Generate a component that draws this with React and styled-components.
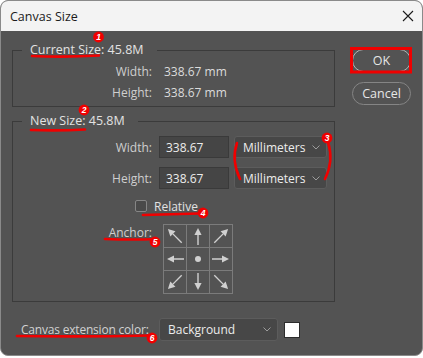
import styled, { createGlobalStyle } from "styled-components";

const GlobalStyle = createGlobalStyle`
  body {
    margin: 0;
    background: #ffffff;
    font-family: "Open Sans", "Liberation Sans", sans-serif;
  }
`

const Window = styled.div`
  position: relative;
  box-sizing: border-box;
  width: 423px;
  height: 356px;
  display: flex;
  flex-direction: column;
  background: #535353;
  border: 1px solid #8a8a8a;
  border-radius: 8px;
  overflow: hidden;
`

const TitleBar = styled.div`
  height: 30px;
  flex-shrink: 0;
  display: flex;
  align-items: center;
  justify-content: space-between;
  padding: 0 8px 0 9px;
  background: #f3f3f3;
  color: #1b1b1b;
  font-size: 12.5px;
`

const Body = styled.div`
  flex: 1;
  display: flex;
  flex-direction: column;
  padding: 10px 10px 0 11px;
  color: #d2d2d2;
  font-size: 12px;
`

const TopRow = styled.div`
  display: flex;
  align-items: flex-start;
`

const LeftCol = styled.div`
  width: 323px;
  display: flex;
  flex-direction: column;
  gap: 5px;
`

const ButtonCol = styled.div`
  display: flex;
  flex-direction: column;
  gap: 10px;
  margin: 8px 0 0 17px;
`

const Button = styled.button`
  box-sizing: border-box;
  width: 59px;
  height: 23px;
  border-radius: 12px;
  border: 1px solid ${(p) => (p.primary ? "#b4b4b4" : "#858585")};
  background: #535353;
  color: #e6e6e6;
  font-family: inherit;
  font-size: 12.5px;
  padding: 0;
`

const Group = styled.fieldset`
  margin: 0;
  min-width: 0;
  padding: ${(p) => p.pad};
  border: 1px solid #3b3b3b;
`

const Legend = styled.legend`
  margin-left: 9px;
  padding: 0 13px 0 8px;
  color: #e2e2e2;
  font-size: 12.5px;
  line-height: 18px;
`

const Row = styled.div`
  display: flex;
  align-items: ${(p) => p.align || "center"};
  height: ${(p) => p.h || 22}px;
  margin-top: ${(p) => p.mt || 0}px;
`

const Label = styled.div`
  width: 139px;
  text-align: right;
  margin-right: ${(p) => p.gap || 7}px;
  margin-top: ${(p) => p.mt || 0}px;
  color: #cfcfcf;
`

const Value = styled.div`
  color: #dcdcdc;
`

const Input = styled.div`
  box-sizing: border-box;
  width: 70px;
  height: 22px;
  margin-right: 5px;
  padding: 0 6px;
  display: flex;
  align-items: center;
  background: #454545;
  border: 1px solid #3a3a3a;
  color: #ececec;
`

const Select = styled.div`
  box-sizing: border-box;
  width: ${(p) => p.w}px;
  height: ${(p) => p.h || 22}px;
  display: flex;
  align-items: center;
  justify-content: space-between;
  padding: 0 6px 0 8px;
  background: #474747;
  border: 1px solid #5c5c5c;
  border-radius: 3px;
  color: #ececec;
`

const CheckRow = styled.label`
  display: flex;
  align-items: center;
  gap: 7px;
  height: 18px;
  margin: 8px 0 0 122px;
  color: #e2e2e2;
`

const Checkbox = styled.span`
  box-sizing: border-box;
  width: 12px;
  height: 12px;
  border: 1px solid #868686;
  border-radius: 2px;
  background: #4a4a4a;
`

const AnchorGrid = styled.div`
  display: grid;
  grid-template-columns: repeat(3, 22px);
  grid-auto-rows: 22px;
  gap: 1px;
  padding: 1px;
  background: #7b7b7b;
`

const Cell = styled.div`
  background: #535353;
  display: flex;
`

const BottomRow = styled.div`
  display: flex;
  align-items: center;
  height: 23px;
  margin-top: 16px;
`

const ExtLabel = styled.div`
  box-sizing: border-box;
  width: 140px;
  padding-left: 9px;
  margin-right: 7px;
  white-space: nowrap;
  letter-spacing: -0.2px;
  color: #d2d2d2;
`

const Swatch = styled.div`
  box-sizing: border-box;
  width: 16px;
  height: 16px;
  margin-left: 6px;
  background: #ffffff;
  border: 1px solid #2c2c2c;
`

const Marks = styled.svg`
  position: absolute;
  left: -1px;
  top: -1px;
  pointer-events: none;
`

const Chevron = () => (
  <svg width="8" height="5" viewBox="0 0 8 5">
    <polyline points="0.5,0.5 4,4 7.5,0.5" fill="none" stroke="#9c9c9c" strokeWidth="1" />
  </svg>
)

const CloseIcon = () => (
  <svg width="12" height="12" viewBox="0 0 12 12">
    <path d="M1 1 L11 11 M11 1 L1 11" stroke="#1b1b1b" strokeWidth="1.1" />
  </svg>
)

const DIRS = [[-1, -1], [0, -1], [1, -1], [-1, 0], null, [1, 0], [-1, 1], [0, 1], [1, 1]]

const Arrow = ({ dir }) => {
  if (!dir) {
    return (
      <svg width="22" height="22" viewBox="0 0 22 22">
        <circle cx="11" cy="11" r="3" fill="#d0d0d0" />
      </svg>
    )
  }
  const [dx, dy] = dir
  const diag = dx !== 0 && dy !== 0
  const len = Math.hypot(dx, dy)
  const ux = dx / len
  const uy = dy / len
  const far = diag ? 10 : 8
  const back = diag ? 9.5 : 9
  const tip = [11 + ux * far, 11 + uy * far]
  const tail = [11 - ux * back, 11 - uy * back]
  const base = [tip[0] - ux * 7, tip[1] - uy * 7]
  const px = -uy * 3.6
  const py = ux * 3.6
  const head = `${tip[0]},${tip[1]} ${base[0] + px},${base[1] + py} ${base[0] - px},${base[1] - py}`
  return (
    <svg width="22" height="22" viewBox="0 0 22 22">
      <line x1={tail[0]} y1={tail[1]} x2={base[0]} y2={base[1]} stroke="#d0d0d0" strokeWidth="1.4" />
      <polygon points={head} fill="#d0d0d0" />
    </svg>
  )
}

const Badge = ({ x, y, n }) => (
  <g>
    <circle cx={x} cy={y} r="5.4" fill="#f00000" />
    <text x={x} y={y + 3} textAnchor="middle" fill="#ffffff" fontSize="8.5" fontWeight="bold" fontStyle="italic" fontFamily="Liberation Sans, sans-serif">{n}</text>
  </g>
)

const Annotations = () => (
  <Marks width="423" height="358" viewBox="0 0 423 358">
    <g fill="none" stroke="#f00000" strokeWidth="2.6" strokeLinecap="round">
      <path d="M32 56 Q65 57.5 99 55.5" />
      <path d="M31 130 Q58 131 85 129.5" />
      <path d="M237 143 Q231 160 240 179" />
      <path d="M328 142 Q334 161 325 179" />
      <path d="M143 215 Q172 214 199 213.5" />
      <path d="M105 239 Q132 240 156 239" />
      <path d="M17 336 Q85 337 150 335.5" />
      <rect x="351.5" y="48.5" width="59" height="23.5" strokeWidth="3" />
    </g>
    <Badge x={98.5} y={37} n="1" />
    <Badge x={84} y={110} n="2" />
    <Badge x={327} y={138} n="3" />
    <Badge x={203} y={213} n="4" />
    <Badge x={155} y={242} n="5" />
    <Badge x={152} y={338} n="6" />
  </Marks>
)

export default function App() {
  return (
    <>
      <GlobalStyle />
      <Window>
        <TitleBar>
          <span>Canvas Size</span>
          <CloseIcon />
        </TitleBar>
        <Body>
          <TopRow>
            <LeftCol>
              <Group pad="2px 0 3px 0">
                <Legend>Current Size: 45.8M</Legend>
                <Row h={21}>
                  <Label gap={12}>Width:</Label>
                  <Value>338.67 mm</Value>
                </Row>
                <Row h={21}>
                  <Label gap={12}>Height:</Label>
                  <Value>338.67 mm</Value>
                </Row>
              </Group>
              <Group pad="6px 0 7px 0">
                <Legend>New Size: 45.8M</Legend>
                <Row>
                  <Label>Width:</Label>
                  <Input>338.67</Input>
                  <Select w={93}>Millimeters<Chevron /></Select>
                </Row>
                <Row mt={9}>
                  <Label>Height:</Label>
                  <Input>338.67</Input>
                  <Select w={93}>Millimeters<Chevron /></Select>
                </Row>
                <CheckRow>
                  <Checkbox />
                  Relative
                </CheckRow>
                <Row align="flex-start" h={70} mt={9}>
                  <Label gap={11} mt={0}>Anchor:</Label>
                  <AnchorGrid>
                    {DIRS.map((d, i) => (
                      <Cell key={i}>
                        <Arrow dir={d} />
                      </Cell>
                    ))}
                  </AnchorGrid>
                </Row>
              </Group>
            </LeftCol>
            <ButtonCol>
              <Button primary>OK</Button>
              <Button>Cancel</Button>
            </ButtonCol>
          </TopRow>
          <BottomRow>
            <ExtLabel>Canvas extension color:</ExtLabel>
            <Select w={119} h={23}>Background<Chevron /></Select>
            <Swatch />
          </BottomRow>
        </Body>
        <Annotations />
      </Window>
    </>
  )
}
